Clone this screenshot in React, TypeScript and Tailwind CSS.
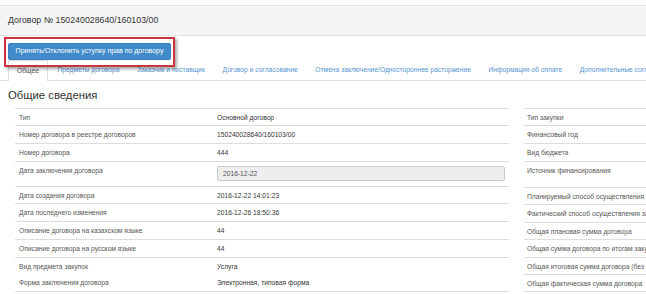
import React from "react";

const leftRows: { label: string; value?: string; input?: string; h: number; noTop?: boolean }[] = [
  { label: "Тип", value: "Основной договор", h: 17 },
  { label: "Номер договора в реестре договоров", value: "150240028640/160103/00", h: 18 },
  { label: "Номер договора", value: "444", h: 18 },
  { label: "Дата заключения договора", input: "2016-12-22", h: 25 },
  { label: "Дата создания договора", value: "2016-12-22 14:01:23", h: 17 },
  { label: "Дата последнего изменения", value: "2016-12-26 18:50:36", h: 18 },
  { label: "Описание договора на казахском языке", value: "44", h: 18 },
  { label: "Описание договора на русском языке", value: "44", h: 18 },
  { label: "Вид предмета закупок", value: "Услуга", h: 17 },
  { label: "Форма заключения договора", value: "Электронная, типовая форма", h: 17, noTop: true },
];

const rightRows: { label: string; h: number }[] = [
  { label: "Тип закупки", h: 17 },
  { label: "Финансовый год", h: 18 },
  { label: "Вид бюджета", h: 18 },
  { label: "Источник финансирования", h: 26 },
  { label: "Планируемый способ осуществления закупки", h: 17 },
  { label: "Фактический способ осуществления закупки", h: 18 },
  { label: "Общая плановая сумма договора", h: 17 },
  { label: "Общая сумма договора по итогам закупки", h: 18 },
  { label: "Общая итоговая сумма договора (без НДС)", h: 17 },
  { label: "Общая фактическая сумма договора", h: 17 },
];

const tabs = [
  "Предметы договора",
  "Заказчик и поставщик",
  "Договор и согласование",
  "Отмена заключение/Одностороннее расторжение",
  "Информация об оплате",
  "Дополнительные соглашения",
];

export default function App() {
  return (
    <div className="w-[646px] h-[294px] overflow-hidden bg-white font-['Liberation_Sans',Arial,sans-serif] text-[#333]">
      <div className="pt-[5px]">
        <div className="h-[31px] border-y border-[#e3e3e3] bg-[#f5f5f5] flex items-center pl-[8px] text-[8.8px] text-[#333]">
          Договор № 150240028640/160103/00
        </div>
      </div>

      <div className="relative pt-[7px]">
        <div className="absolute left-[4px] top-[1px] w-[171px] h-[30px] border-2 border-[#c9343d] shadow-[2px_2px_3px_rgba(0,0,0,0.35)] z-10" />
        <div className="ml-[8px] w-[163px] h-[17px] bg-[#428bca] border border-[#3a7fc0] rounded-[2px] flex items-center justify-center text-white text-[7px] whitespace-nowrap">
          Принять/Отклонить уступку прав по договору
        </div>
      </div>

      <div className="flex h-[21px] border-b border-[#ddd] pl-[8px] text-[6.7px] whitespace-nowrap">
        <div className="h-[21px] px-[8px] mr-[1.5px] border border-b-0 border-[#ddd] bg-white flex items-center text-[#555] -mb-px">
          Общее
        </div>
        {tabs.map((t) => (
          <div key={t} className="h-[20px] px-[8px] mr-[1.5px] flex items-center text-[#5595d2]">
            {t}
          </div>
        ))}
      </div>

      <div className="pl-[8px] pt-[7px] pb-[6px] h-[27px] text-[11.3px] leading-[14px] text-[#333]">
        Общие сведения
      </div>

      <div className="flex text-[6.7px] leading-[9px] whitespace-nowrap">
        <div className="ml-[15px] w-[494px] border-b border-[#ddd]">
          {leftRows.map((r) => (
            <div
              key={r.label}
              className={`flex ${r.noTop ? "" : "border-t border-[#ddd]"}`}
              style={{ height: r.h }}
            >
              <div className="w-[202px] pl-[4px] pt-[4px] text-[#555]">{r.label}</div>
              <div className="flex-1 pt-[4px] text-[#333]">
                {r.input ? (
                  <div className="w-[288px] h-[15px] bg-[#eee] border border-[#ccc] rounded-[2px] flex items-center pl-[5px] text-[#555]">
                    {r.input}
                  </div>
                ) : (
                  r.value
                )}
              </div>
            </div>
          ))}
        </div>
        <div className="ml-[15px] flex-1 border-b border-[#ddd] overflow-hidden">
          {rightRows.map((r) => (
            <div key={r.label} className="border-t border-[#ddd] pl-[3px] pt-[4px] text-[#555]" style={{ height: r.h }}>
              {r.label}
            </div>
          ))}
        </div>
      </div>
    </div>
  );
}
